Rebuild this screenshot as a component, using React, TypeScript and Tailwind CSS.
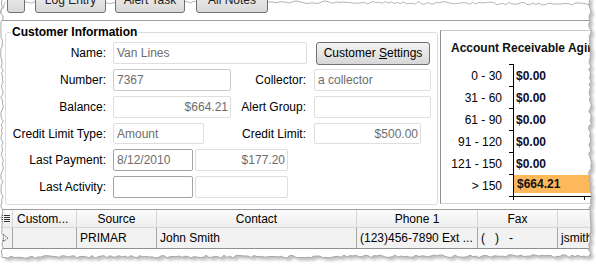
import React from 'react';

// pseudo random, fixed so the torn edge is the same every render
const rnd = (s: number) => {
  const x = Math.sin(s * 12.9898) * 43758.5453;
  return x - Math.floor(x);
};

const jag = (x0: number, y0: number, x1: number, y1: number, seed: number, step = 3, amp = 1.4) => {
  const pts: [number, number][] = [];
  const len = Math.hypot(x1 - x0, y1 - y0);
  const n = Math.max(1, Math.round(len / step));
  const nx = -(y1 - y0) / len;
  const ny = (x1 - x0) / len;
  for (let i = 0; i <= n; i++) {
    const t = i / n;
    const o = (rnd(seed + i * 1.7) - 0.5) * 2 * amp;
    pts.push([x0 + (x1 - x0) * t + nx * o, y0 + (y1 - y0) * t + ny * o]);
  }
  return pts;
};

const toPath = (pts: [number, number][]) =>
  pts.map((p, i) => `${i === 0 ? 'M' : 'L'}${p[0].toFixed(1)} ${p[1].toFixed(1)}`).join(' ');

const TornEdges = () => {
  const right = jag(590, 3, 590, 256, 11);
  const bottom = jag(590, 256, 2, 257, 37);
  const left = jag(2, 257, 2, 4, 71);
  const paper = [[2, -3] as [number, number], [590, -3] as [number, number], ...right, ...bottom, ...left];
  const paperPath = toPath(paper) + ' Z';
  const outside = 'M0 0 H596 V269 H0 Z ' + paperPath;
  const tops = [
    jag(0, 14, 6, 2, 5, 2, 1),
    jag(25, 3, 35, 2, 91),
    jag(106, 2, 115, 3, 121),
    jag(185, 3, 196, 2, 151),
    jag(268, 2, 590, 4, 181),
  ];
  return (
    <svg className="absolute left-0 top-0 pointer-events-none" width="596" height="269">
      <defs>
        <filter id="blur" x="-5%" y="-5%" width="110%" height="110%">
          <feGaussianBlur stdDeviation="1.6" />
        </filter>
        <clipPath id="outside">
          <path d={outside} clipRule="evenodd" />
        </clipPath>
      </defs>
      <path d={outside} fill="#ffffff" fillRule="evenodd" />
      <g clipPath="url(#outside)">
        <path d={paperPath} transform="translate(3 3)" fill="#8c8c8c" opacity="0.55" filter="url(#blur)" />
      </g>
      <path d={paperPath} fill="none" stroke="#a8a8a8" strokeWidth="1" />
      {tops.map((t, i) => (
        <path key={i} d={toPath(t)} fill="none" stroke="#b4b4b4" strokeWidth="1" />
      ))}
    </svg>
  );
};

const TopButton = ({ className, label }: { className: string; label: string }) => (
  <div
    className={`${className} h-[24px] mt-[-11px] shrink-0 rounded-[3px] border border-[#707070] bg-gradient-to-b from-[#f2f2f2] to-[#d8d8d8] flex items-center justify-center pb-[2px] text-[12px] text-[#222]`}
  >
    {label}
  </div>
);

const Field = ({
  w,
  value = '',
  right = false,
  tone = 'mid',
}: {
  w: string;
  value?: string;
  right?: boolean;
  tone?: 'light' | 'mid' | 'dark';
}) => {
  const border =
    tone === 'dark' ? 'border-[#a4a4a4]' : tone === 'light' ? 'border-[#dedede]' : 'border-[#cbcbcb]';
  return (
    <div
      className={`${w} h-full shrink-0 flex items-center rounded-[2px] border ${border} bg-white text-[#6d6d6d] ${
        right ? 'justify-end pr-[2px]' : 'pl-[3px]'
      }`}
    >
      {value}
    </div>
  );
};

const Label = ({ w, text }: { w: string; text: string }) => (
  <div className={`${w} shrink-0 text-right`}>{text}</div>
);

const aging = [
  { range: '0 - 30', amount: '$0.00' },
  { range: '31 - 60', amount: '$0.00' },
  { range: '61 - 90', amount: '$0.00' },
  { range: '91 - 120', amount: '$0.00' },
  { range: '121 - 150', amount: '$0.00' },
  { range: '> 150', amount: '$664.21', bar: true },
];

const columns = [
  { title: 'Custom...', w: 'w-[64px]', left: true, value: '' },
  { title: 'Source', w: 'w-[80px]', value: 'PRIMAR' },
  { title: 'Contact', w: 'w-[200px]', value: 'John Smith' },
  { title: 'Phone 1', w: 'w-[121px]', value: '(123)456-7890 Ext ...' },
  { title: 'Fax', w: 'w-[80px]', value: '(   )   -' },
  { title: '', w: 'w-[60px]', value: 'jsmith@' },
];

export default function App() {
  return (
    <div className="relative w-[596px] h-[269px] overflow-hidden bg-white text-[12px] leading-[14px] text-black font-['Liberation_Sans',Arial,sans-serif]">
      <div className="w-[596px]">
        {/* toolbar buttons, scrolled mostly out of view */}
        <div className="flex h-[14px] overflow-hidden">
          <TopButton className="ml-[7px] w-[18px]" label="^" />
          <TopButton className="ml-[10px] w-[71px]" label="Log Entry" />
          <TopButton className="ml-[9px] w-[70px]" label="Alert Task" />
          <TopButton className="ml-[11px] w-[72px]" label="All Notes" />
        </div>
        <div className="mt-[6px] border-t border-[#a0a0a0]" />

        <div className="flex items-start">
          {/* Customer Information group */}
          <fieldset className="ml-[5px] mt-[4px] w-[433px] rounded-[3px] border border-[#d9dde2] pt-[3px] pb-[6px]">
            <legend className="ml-[5px] px-[1px] font-bold leading-[14px]">Customer Information</legend>
            <div className="flex flex-col gap-[5px]">
              <div className="flex items-center h-[22px]">
                <Label w="w-[100px]" text="Name:" />
                <div className="ml-[7px] h-full flex">
                  <Field w="w-[194px]" value="Van Lines" tone="light" />
                </div>
                <button className="ml-[9px] w-[114px] h-[23px] shrink-0 rounded-[3px] border border-[#707070] bg-gradient-to-b from-[#f3f3f3] via-[#e6e6e6] to-[#d6d6d6] text-[12px] leading-[14px]">
                  Customer <span className="underline">S</span>ettings
                </button>
              </div>
              <div className="flex items-center h-[22px]">
                <Label w="w-[100px]" text="Number:" />
                <div className="ml-[7px] h-full flex">
                  <Field w="w-[118px]" value="7367" />
                </div>
                <Label w="w-[75px]" text="Collector:" />
                <div className="ml-[8px] h-full flex">
                  <Field w="w-[117px]" value="a collector" tone="light" />
                </div>
              </div>
              <div className="flex items-center h-[22px]">
                <Label w="w-[100px]" text="Balance:" />
                <div className="ml-[7px] h-full flex">
                  <Field w="w-[118px]" value="$664.21" right tone="light" />
                </div>
                <Label w="w-[75px]" text="Alert Group:" />
                <div className="ml-[8px] h-full flex">
                  <Field w="w-[117px]" tone="light" />
                </div>
              </div>
              <div className="flex items-center h-[21px]">
                <Label w="w-[100px]" text="Credit Limit Type:" />
                <div className="ml-[7px] h-full flex">
                  <Field w="w-[91px]" value="Amount" tone="light" />
                </div>
                <Label w="w-[102px]" text="Credit Limit:" />
                <div className="ml-[8px] h-full flex">
                  <Field w="w-[107px]" value="$500.00" right tone="light" />
                </div>
              </div>
              <div className="flex items-center h-[22px]">
                <Label w="w-[100px]" text="Last Payment:" />
                <div className="ml-[7px] h-full flex gap-[2px]">
                  <Field w="w-[80px]" value="8/12/2010" tone="dark" />
                  <Field w="w-[93px]" value="$177.20" right tone="light" />
                </div>
              </div>
              <div className="flex items-center h-[22px]">
                <Label w="w-[100px]" text="Last Activity:" />
                <div className="ml-[7px] h-full flex gap-[2px]">
                  <Field w="w-[80px]" tone="dark" />
                  <Field w="w-[93px]" tone="light" />
                </div>
              </div>
            </div>
          </fieldset>

          {/* Aging chart */}
          <div className="ml-[2px] mt-[9px] h-[174px] flex-1 overflow-hidden border-l border-t border-b border-l-[#8e8e8e] border-t-[#c9c9c9] border-b-[#d4d4d4] bg-white pt-[10px]">
            <div className="ml-[10px] whitespace-nowrap font-bold text-[#111]">Account Receivable Aging</div>
            <div className="relative mt-[9px] pt-[1px] h-[136px]">
              <svg className="absolute left-0 top-0" width="160" height="136">
                <line x1="72.5" y1="0" x2="72.5" y2="132.5" stroke="#000" />
                {[0, 22, 44, 66, 88, 110, 132].map((y) => (
                  <line key={y} x1="68" y1={y + 0.5} x2="72" y2={y + 0.5} stroke="#000" />
                ))}
                <line x1="68" y1="132.5" x2="160" y2="132.5" stroke="#000" />
                <line x1="72.5" y1="132" x2="72.5" y2="137" stroke="#000" />
                <line x1="143.5" y1="132" x2="143.5" y2="137" stroke="#000" />
              </svg>
              {aging.map((a) => (
                <div key={a.range} className="relative flex items-center h-[22px]">
                  <div className="w-[61px] text-right">{a.range}</div>
                  {a.bar ? (
                    <div className="ml-[12px] mt-[-4px] h-[18px] flex-1 flex items-center bg-[#fdb85c] pl-[3px] font-bold text-[#111]">
                      {a.amount}
                    </div>
                  ) : (
                    <div className="ml-[14px] font-bold text-[#0c0c2e]">{a.amount}</div>
                  )}
                </div>
              ))}
            </div>
          </div>
        </div>

        {/* Contacts grid */}
        <div className="mt-[4px] border-t border-[#9c9c9c]">
          <div className="flex h-[18px] bg-gradient-to-b from-[#fbfbfb] to-[#eeeeee] border-b border-[#d6d6d6]">
            <div className="w-[13px] shrink-0 flex items-center justify-center border-r border-[#d6d6d6]">
              <svg width="8" height="9" viewBox="0 0 8 9">
                {[1, 3, 5, 7].map((y) => (
                  <g key={y}>
                    <rect x="0" y={y} width="1" height="1" fill="#333" />
                    <rect x="2" y={y} width="6" height="1" fill="#333" />
                  </g>
                ))}
              </svg>
            </div>
            {columns.map((c, i) => (
              <div
                key={i}
                className={`${c.w} shrink-0 flex items-center border-r border-[#d6d6d6] ${
                  c.left ? 'pl-[4px]' : 'justify-center'
                }`}
              >
                {c.title}
              </div>
            ))}
          </div>
          <div className="flex h-[21px] bg-[#f2f2f2] border-b border-[#8f8f8f]">
            <div className="w-[13px] shrink-0 flex items-center justify-center border-r border-[#a6a6a6]">
              <svg width="6" height="8" viewBox="0 0 6 8">
                <path d="M0.5 0.5 L5 4 L0.5 7.5 Z" fill="none" stroke="#333" strokeWidth="1" strokeDasharray="1 1" />
              </svg>
            </div>
            {columns.map((c, i) => (
              <div
                key={i}
                className={`${c.w} shrink-0 flex items-center overflow-hidden whitespace-pre border-r border-[#a6a6a6] pl-[3px]`}
              >
                {c.value}
              </div>
            ))}
          </div>
        </div>
      </div>
      <TornEdges />
    </div>
  );
}
